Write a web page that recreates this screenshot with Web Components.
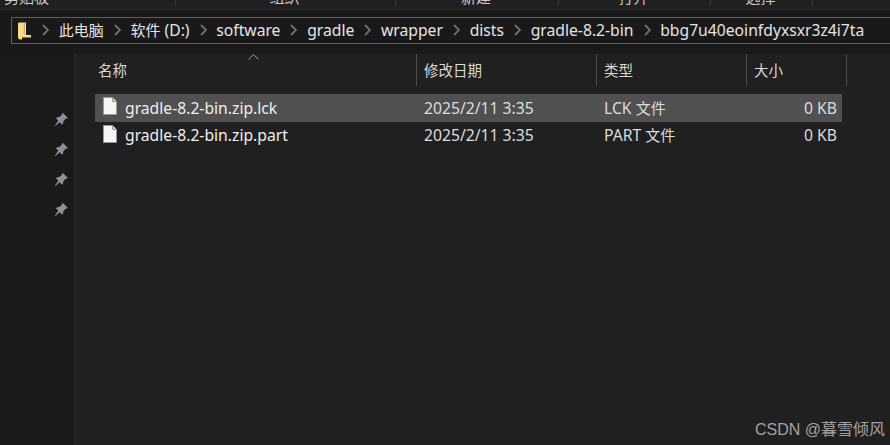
<!DOCTYPE html>
<html><head><meta charset="utf-8"><style>
html,body{margin:0;padding:0;background:#202020;}
body{width:890px;height:445px;overflow:hidden;font-family:"Noto Sans","Noto Sans CJK SC",sans-serif;color:#e6e6e6;position:relative}
.cjk{font-size:15px}
</style></head><body>
<x-explorer>
  <x-ribbon>
    <x-group style="width:176px" label="剪贴板" off="-61"></x-group>
    <x-group style="width:220px" label="组织" off="-1"></x-group>
    <x-group style="width:163px" label="新建" off="-1"></x-group>
    <x-group style="width:152px" label="打开" off="-1"></x-group>
    <x-group style="width:102px" label="选择" off="-1"></x-group>
  </x-ribbon>
  <x-address>
    <x-crumb folder></x-crumb>
    <x-crumb first><span class="cjk">此电脑</span></x-crumb><x-crumb><span><span class="cjk">软件</span> (D:)</span></x-crumb><x-crumb>software</x-crumb><x-crumb>gradle</x-crumb><x-crumb>wrapper</x-crumb><x-crumb>dists</x-crumb><x-crumb>gradle-8.2-bin</x-crumb><x-crumb>bbg7u40eoinfdyxsxr3z4i7ta</x-crumb>
  </x-address>
  <x-body-pane>
    <x-quick slot="side"><x-pin></x-pin><x-pin></x-pin><x-pin></x-pin><x-pin></x-pin></x-quick>
    <x-files slot="main">
      <x-file-row selected name="gradle-8.2-bin.zip.lck" date="2025/2/11 3:35" type="LCK" size="0 KB"></x-file-row>
      <x-file-row name="gradle-8.2-bin.zip.part" date="2025/2/11 3:35" type="PART" size="0 KB"></x-file-row>
    </x-files>
  </x-body-pane>
</x-explorer>
<x-watermark>CSDN @暮雪倾风</x-watermark>
<script>
function def(name, html, init){
  customElements.define(name, class extends HTMLElement{
    constructor(){super();this.attachShadow({mode:'open'}).innerHTML=html;}
    connectedCallback(){ if(init) init(this); }
  });
}
def('x-explorer',`<style>:host{display:flex;flex-direction:column;width:890px;height:445px;background:#191919}</style><slot></slot>`);
def('x-ribbon',`<style>:host{display:flex;height:9px;background:#202020;border-bottom:1px solid #2b2b2b;overflow:hidden}</style><slot></slot>`);
def('x-group',`<style>:host{display:flex;justify-content:center;box-sizing:border-box;height:6px;border-right:1px solid #3a3a3a;overflow:visible}
span{font:15px/18px "Noto Sans CJK SC",sans-serif;color:#c8c8c8;margin-top:-12px;white-space:nowrap;height:18px;display:block}</style><span></span>`,
 el=>{const s=el.shadowRoot.querySelector('span');s.textContent=el.getAttribute('label');s.style.transform='translateX('+el.getAttribute('off')+'px)';});
def('x-address',`<style>:host{display:flex;align-items:center;box-sizing:border-box;height:28px;margin:7px 0 0 11px;padding-left:6px;border:solid #5c5c5c;border-width:1.5px 0 1.5px 1.5px;background:#191919;white-space:nowrap;overflow:hidden}</style><slot></slot>`);
def('x-crumb',`<style>:host{display:inline-flex;align-items:center;font:15.7px/20px "Noto Sans","Noto Sans CJK SC",sans-serif;color:#e4e4e4;margin-top:-1px}
:host([first]) .chev{margin-left:11px}
svg{display:block}.chev{margin:0 9.700px 0 10px}</style><svg class="chev" width="7" height="12" viewBox="0 0 7 12"><path d="M1 1l5 5-5 5" fill="none" stroke="#6e6e6e" stroke-width="1.8"/></svg><slot></slot>`,
 el=>{ if(el.hasAttribute('folder')){ el.shadowRoot.innerHTML=`<style>:host{display:inline-flex;margin-top:1px}svg{display:block}</style><svg width="13" height="18" viewBox="0 0 13 18"><path d="M0 1.500Q0 .5 1 .5h5.500v12.500H13v2.500H4v2L1.500 17.500 0 16z" fill="#f5d47a"/><path d="M6.500 .5H8V13h5V14H6.500z" fill="#fbe6a2"/><path d="M4 2v13.500H.5V2z" fill="#f9dd8a"/></svg>`; }});
def('x-body-pane',`<style>:host{display:flex;height:400px;margin-top:10px}.s{display:block;width:76px;flex:none;height:100%}.m{display:block;flex:1;background:#202020}</style><slot class="s" name="side"></slot><slot class="m" name="main"></slot>`);
def('x-quick',`<style>:host{display:flex;flex-direction:column;align-items:flex-end;height:100%;padding:58px 5px 0 0;box-sizing:border-box;gap:15px;background:#1a1a1a;border-right:2px solid #262626;width:76px}</style><slot></slot>`);
def('x-pin',`<style>:host{display:block;width:15px;height:15px}svg{display:block}</style><svg width="15" height="15" viewBox="0 0 15 15"><path d="M9 1l5 5-1.700.8-1 .1-2 2.500-.3 2.500-1 .7-2.400-2.400L1.500 14 1 13.500l3.300-4.900L2 6.400l.7-1 2.500-.3 2.500-2 .2-1.200z" fill="#8a9299"/></svg>`);
def('x-files',`<style>:host{display:flex;flex-direction:column;height:100%;padding-left:19px;position:relative}
.h{display:grid;grid-template-columns:322px 180px 150px 100px;height:32px;padding-bottom:8px}
.c{box-sizing:border-box;border-right:1.500px solid #4c4c4c;padding-left:7px;font:14.500px/31px "Noto Sans CJK SC",sans-serif;color:#d8d8d8}
.c:first-child{padding-left:3px}
.sort{position:absolute;left:172px;top:0;display:block}
</style><svg class="sort" width="11" height="6" viewBox="0 0 11 6"><path d="M.5 5.500l5-5 5 5" fill="none" stroke="#9a9a9a"/></svg>
<div class="h"><div class="c">名称</div><div class="c">修改日期</div><div class="c">类型</div><div class="c">大小</div></div><slot></slot>`);
def('x-file-row',`<style>:host{display:grid;grid-template-columns:322px 180px 150px 95px;width:747px;height:27.500px;align-items:center;font:15.7px/20px "Noto Sans","Noto Sans CJK SC",sans-serif;color:#dcdcdc;white-space:nowrap}
:host([selected]){background:#505050}
.n{display:flex;align-items:center;gap:8px;padding-left:8px;color:#eee}
svg{display:block;flex:none;margin-top:-3px}
.d,.t{padding-left:7px}.z{text-align:right;padding-right:5px}
.cjk{font-size:15px}
</style><div class="n"><svg width="14" height="18" viewBox="0 0 14 18"><path d="M.5.500H9.500L13.500 4.500V17.500H.5z" fill="#f4f6f8" stroke="#9a9a9a"/><path d="M9.500.500V4.500H13.500" fill="#cfd2d5" stroke="#9a9a9a"/></svg><span class="nm"></span></div><div class="d"></div><div class="t"><span class="ty"></span> <span class="cjk">文件</span></div><div class="z"></div>`,
 el=>{const r=el.shadowRoot;r.querySelector('.nm').textContent=el.getAttribute('name');r.querySelector('.d').textContent=el.getAttribute('date');r.querySelector('.ty').textContent=el.getAttribute('type');r.querySelector('.z').textContent=el.getAttribute('size');});
def('x-watermark',`<style>:host{position:absolute;right:5px;top:419px;font:16px/22px "Liberation Sans","Noto Sans CJK SC",sans-serif;color:#a2a2a2;white-space:nowrap}</style><slot></slot>`);
</script>
</body></html>
